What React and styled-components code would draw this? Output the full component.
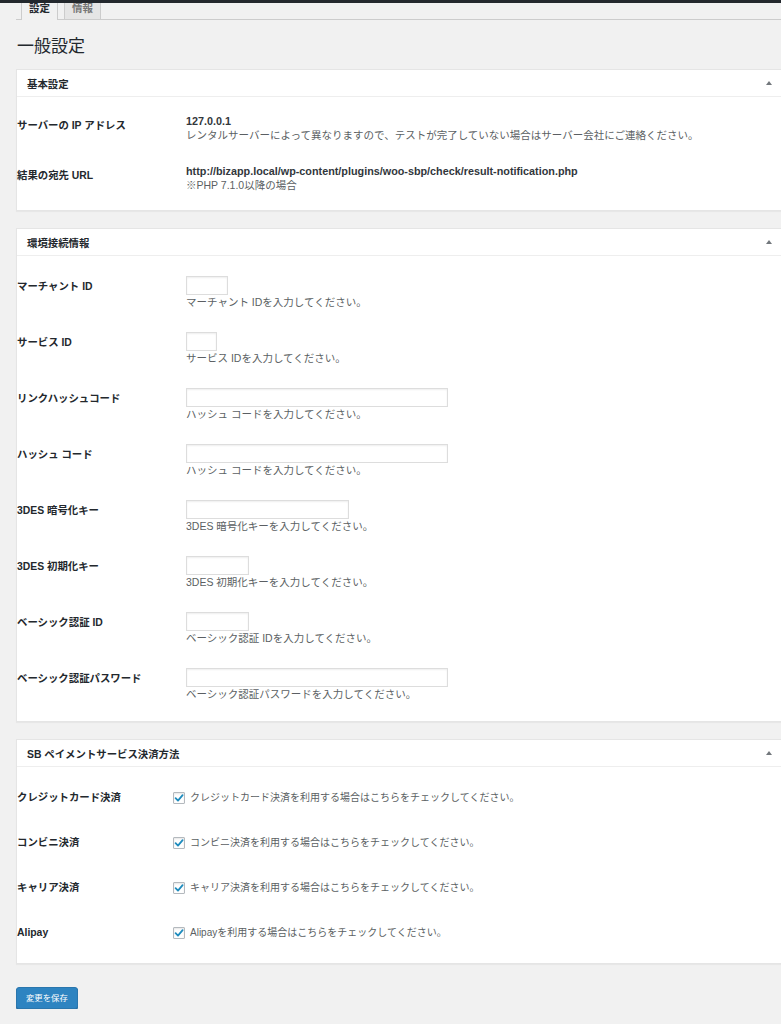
import React from 'react';
import styled, { createGlobalStyle } from 'styled-components';

const GlobalStyle = createGlobalStyle`
    html, body {
        margin: 0;
        padding: 0;
        background: #f1f1f1;
        overflow-x: hidden;
    }
    body {
        font-family: "Liberation Sans", "Noto Sans CJK JP", sans-serif;
        color: #23282d;
    }
`;

const TopBar = styled.div`
    height: 3px;
    background: #23282d;
`;

const TabNav = styled.nav`
    display: flex;
    align-items: flex-end;
    gap: 6px;
    height: 17px;
    margin-left: 16px;
    padding-left: 5px;
    overflow: hidden;
    box-shadow: inset 0 -1px #cccccc;
`;

const Tab = styled.div`
    height: 23px;
    box-sizing: border-box;
    padding: 3px 7px 0;
    border: 1px solid #cccccc;
    border-bottom: ${p => (p.$active ? 'none' : '1px solid #cccccc')};
    background: ${p => (p.$active ? '#f1f1f1' : '#e5e5e5')};
    color: ${p => (p.$active ? '#23282d' : '#777777')};
    font-size: 10.5px;
    font-weight: 700;
    line-height: 14px;
`;

const Main = styled.main`
    width: 774px;
    margin-left: 16px;
`;

const Heading = styled.h1`
    margin: 15px 0 11px 1px;
    font-size: 17px;
    font-weight: 400;
    line-height: 23px;
    color: #23282d;
`;

const Panel = styled.section`
    background: #ffffff;
    border: 1px solid #e5e5e5;
    box-shadow: 0 1px 1px rgba(0, 0, 0, 0.04);
    margin-bottom: 17px;
`;

const PanelHeader = styled.header`
    display: flex;
    align-items: center;
    justify-content: space-between;
    height: 26px;
    padding: 0 17px 0 10px;
    border-bottom: 1px solid #eeeeee;
`;

const PanelTitle = styled.h2`
    margin: 0;
    font-size: 10.4px;
    font-weight: 700;
    color: #23282d;
`;

const ToggleArrow = styled.span`
    width: 0;
    height: 0;
    border-left: 3px solid transparent;
    border-right: 3px solid transparent;
    border-bottom: 4px solid #72777c;
`;

const PanelBody = styled.div`
    padding: ${p => p.$pad};
`;

const Row = styled.div`
    display: grid;
    grid-template-columns: ${p => p.$label}px 1fr;
    align-items: ${p => p.$align || 'start'};
    padding: ${p => p.$pad};
`;

const Label = styled.div`
    padding-top: ${p => p.$offset || 0}px;
    font-size: 10.4px;
    font-weight: 700;
    line-height: 14px;
    color: #23282d;
`;

const Value = styled.div`
    display: flex;
    flex-direction: column;
    align-items: flex-start;
    font-size: 10.5px;
    line-height: 14px;
`;

const Strong = styled.span`
    font-size: 10.8px;
    font-weight: 700;
    color: #32373c;
`;

const Description = styled.span`
    color: #5b5f63;
`;

const TextInput = styled.input`
    width: ${p => p.$w}px;
    height: 19px;
    box-sizing: border-box;
    margin: 0;
    padding: 0 4px;
    border: 1px solid #dddddd;
    border-radius: 0;
    background: #ffffff;
    box-shadow: inset 0 1px 2px rgba(0, 0, 0, 0.07);
    outline: none;
`;

const CheckLine = styled.label`
    display: flex;
    align-items: center;
    gap: 5px;
    font-size: 10px;
    line-height: 15px;
    color: #5b5f63;
`;

const CheckBox = styled.span`
    display: flex;
    align-items: center;
    justify-content: center;
    width: 12px;
    height: 12px;
    box-sizing: border-box;
    border: 1px solid #b4b9be;
    border-radius: 1px;
    background: #ffffff;
    box-shadow: inset 0 1px 2px rgba(0, 0, 0, 0.1);
`;

const SaveButton = styled.button`
    margin-top: 6px;
    height: 22px;
    padding: 0 9px;
    border: 1px solid #2a76ad;
    border-radius: 3px;
    background: #2e84c1;
    color: #ffffff;
    font-family: "Liberation Sans", "Noto Sans CJK JP", sans-serif;
    font-size: 8.4px;
    line-height: 20px;
    box-shadow: 0 1px 0 #21669a;
`;

const connectionFields = [
    ['マーチャント ID', 42, 'マーチャント IDを入力してください。'],
    ['サービス ID', 31, 'サービス IDを入力してください。'],
    ['リンクハッシュコード', 262, 'ハッシュ コードを入力してください。'],
    ['ハッシュ コード', 262, 'ハッシュ コードを入力してください。'],
    ['3DES 暗号化キー', 163, '3DES 暗号化キーを入力してください。'],
    ['3DES 初期化キー', 63, '3DES 初期化キーを入力してください。'],
    ['ベーシック認証 ID', 63, 'ベーシック認証 IDを入力してください。'],
    ['ベーシック認証パスワード', 262, 'ベーシック認証パスワードを入力してください。'],
];

const paymentMethods = [
    ['クレジットカード決済', 'クレジットカード決済を利用する場合はこちらをチェックしてください。'],
    ['コンビニ決済', 'コンビニ決済を利用する場合はこちらをチェックしてください。'],
    ['キャリア決済', 'キャリア決済を利用する場合はこちらをチェックしてください。'],
    ['Alipay', 'Alipayを利用する場合はこちらをチェックしてください。'],
];

const Check = () => (
    <CheckBox>
        <svg width="10" height="10" viewBox="0 0 10 10">
            <path d="M1.6 5.2 L4 7.6 L8.6 2.2" fill="none" stroke="#1e8cbe" strokeWidth="1.8" strokeLinecap="round" strokeLinejoin="round" />
        </svg>
    </CheckBox>
);

const PanelBox = ({ title, children }) => (
    <Panel>
        <PanelHeader>
            <PanelTitle>{title}</PanelTitle>
            <ToggleArrow />
        </PanelHeader>
        {children}
    </Panel>
);

const App = () => {
    return (
        <>
            <GlobalStyle />
            <TopBar />
            <TabNav>
                <Tab $active>設定</Tab>
                <Tab>情報</Tab>
            </TabNav>
            <Main>
                <Heading>一般設定</Heading>

                <PanelBox title="基本設定">
                    <PanelBody $pad="6px 0 7px">
                        <Row $label={169} $pad="11px 0">
                            <Label $offset={5}>サーバーの IP アドレス</Label>
                            <Value>
                                <Strong>127.0.0.1</Strong>
                                <Description>レンタルサーバーによって異なりますので、テストが完了していない場合はサーバー会社にご連絡ください。</Description>
                            </Value>
                        </Row>
                        <Row $label={169} $pad="11px 0">
                            <Label $offset={5}>結果の宛先 URL</Label>
                            <Value>
                                <Strong>http://bizapp.local/wp-content/plugins/woo-sbp/check/result-notification.php</Strong>
                                <Description>※PHP 7.1.0以降の場合</Description>
                            </Value>
                        </Row>
                    </PanelBody>
                </PanelBox>

                <PanelBox title="環境接続情報">
                    <PanelBody $pad="8px 0 9px">
                        {connectionFields.map(([label, width, hint]) => (
                            <Row key={label} $label={169} $pad="11.5px 0">
                                <Label $offset={4}>{label}</Label>
                                <Value>
                                    <TextInput type="text" $w={width} />
                                    <Description>{hint}</Description>
                                </Value>
                            </Row>
                        ))}
                    </PanelBody>
                </PanelBox>

                <PanelBox title="SB ペイメントサービス決済方法">
                    <PanelBody $pad="8px 0">
                        {paymentMethods.map(([label, text]) => (
                            <Row key={label} $label={156} $pad="15px 0" $align="center">
                                <Label>{label}</Label>
                                <CheckLine>
                                    <Check />
                                    {text}
                                </CheckLine>
                            </Row>
                        ))}
                    </PanelBody>
                </PanelBox>

                <SaveButton type="button">変更を保存</SaveButton>
            </Main>
        </>
    );
};

export default App;
